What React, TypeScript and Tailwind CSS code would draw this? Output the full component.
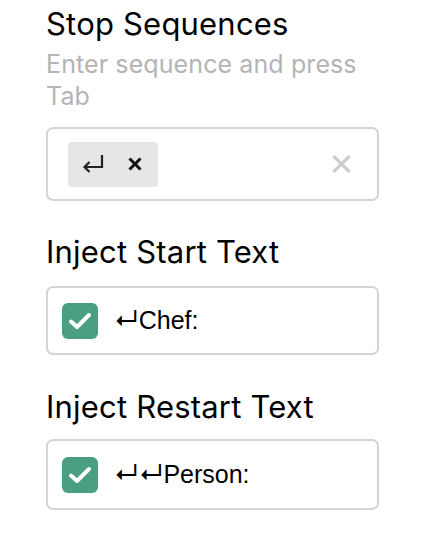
import React from "react";

const Check = () => (
  <div className="w-[36px] h-[36px] rounded-[6px] bg-[#4a9f80] flex items-center justify-center shrink-0">
    <svg width="24" height="18" viewBox="0 0 24 18" fill="none" stroke="white" strokeWidth="4" strokeLinecap="round" strokeLinejoin="round">
      <path d="M3 9.5l6 5.5L21 3" />
    </svg>
  </div>
);

const Field = ({ arrows, text }: { arrows: string; text: string }) => (
  <div className="ml-[16px] text-[25px] text-black flex items-baseline font-['Liberation_Sans',sans-serif]">
    <span className="font-[Inter,sans-serif] text-[25px] leading-none">{arrows}</span>
    {text}
  </div>
);

export default function App() {
  return (
    <div className="w-[424px] h-[536px] bg-white pl-[46px] pt-[6px] font-[Inter,'Noto_Sans',sans-serif]">
      <div className="w-[333px]">
        <div className="text-[31px] leading-[36px] text-black tracking-[0.2px]">Stop Sequences</div>
        <div className="text-[25px] leading-[32px] text-[#b4b4b4] mt-[6px] tracking-[0.1px]">
          Enter sequence and press Tab
        </div>
        <div className="mt-[15px] h-[74px] border-2 border-[#d4d4d4] rounded-[7px] flex items-center pl-[20px] pr-[26px]">
          <div className="h-[45px] w-[90px] bg-[#e6e6e6] rounded-[4px] flex items-center pl-[14px] gap-[24px]">
            <svg width="22" height="18" viewBox="0 0 22 18" fill="none" stroke="#222" strokeWidth="2.2">
              <path d="M20 0v12H3" />
              <path d="M7.5 7L2.5 12l5 5" />
            </svg>
            <svg width="14" height="14" viewBox="0 0 14 14" stroke="#111" strokeWidth="3" strokeLinecap="butt">
              <path d="M1.5 1.5l11 11M12.5 1.5l-11 11" />
            </svg>
          </div>
          <div className="ml-auto">
            <svg width="19" height="18" viewBox="0 0 19 18" stroke="#cccccc" strokeWidth="3.2">
              <path d="M1.5 1l16 16M17.5 1l-16 16" />
            </svg>
          </div>
        </div>

        <div className="mt-[33px] text-[31px] leading-[36px] text-black tracking-[0.2px]">Inject Start Text</div>
        <div className="mt-[16px] h-[69px] border-2 border-[#d4d4d4] rounded-[7px] flex items-center pl-[14px]">
          <Check />
          <Field arrows="↵" text="Chef:" />
        </div>

        <div className="mt-[34px] text-[31px] leading-[36px] text-black tracking-[0.2px]">Inject Restart Text</div>
        <div className="mt-[14px] h-[71px] border-2 border-[#d4d4d4] rounded-[7px] flex items-center pl-[14px]">
          <Check />
          <Field arrows="↵↵" text="Person:" />
        </div>
      </div>
    </div>
  );
}
